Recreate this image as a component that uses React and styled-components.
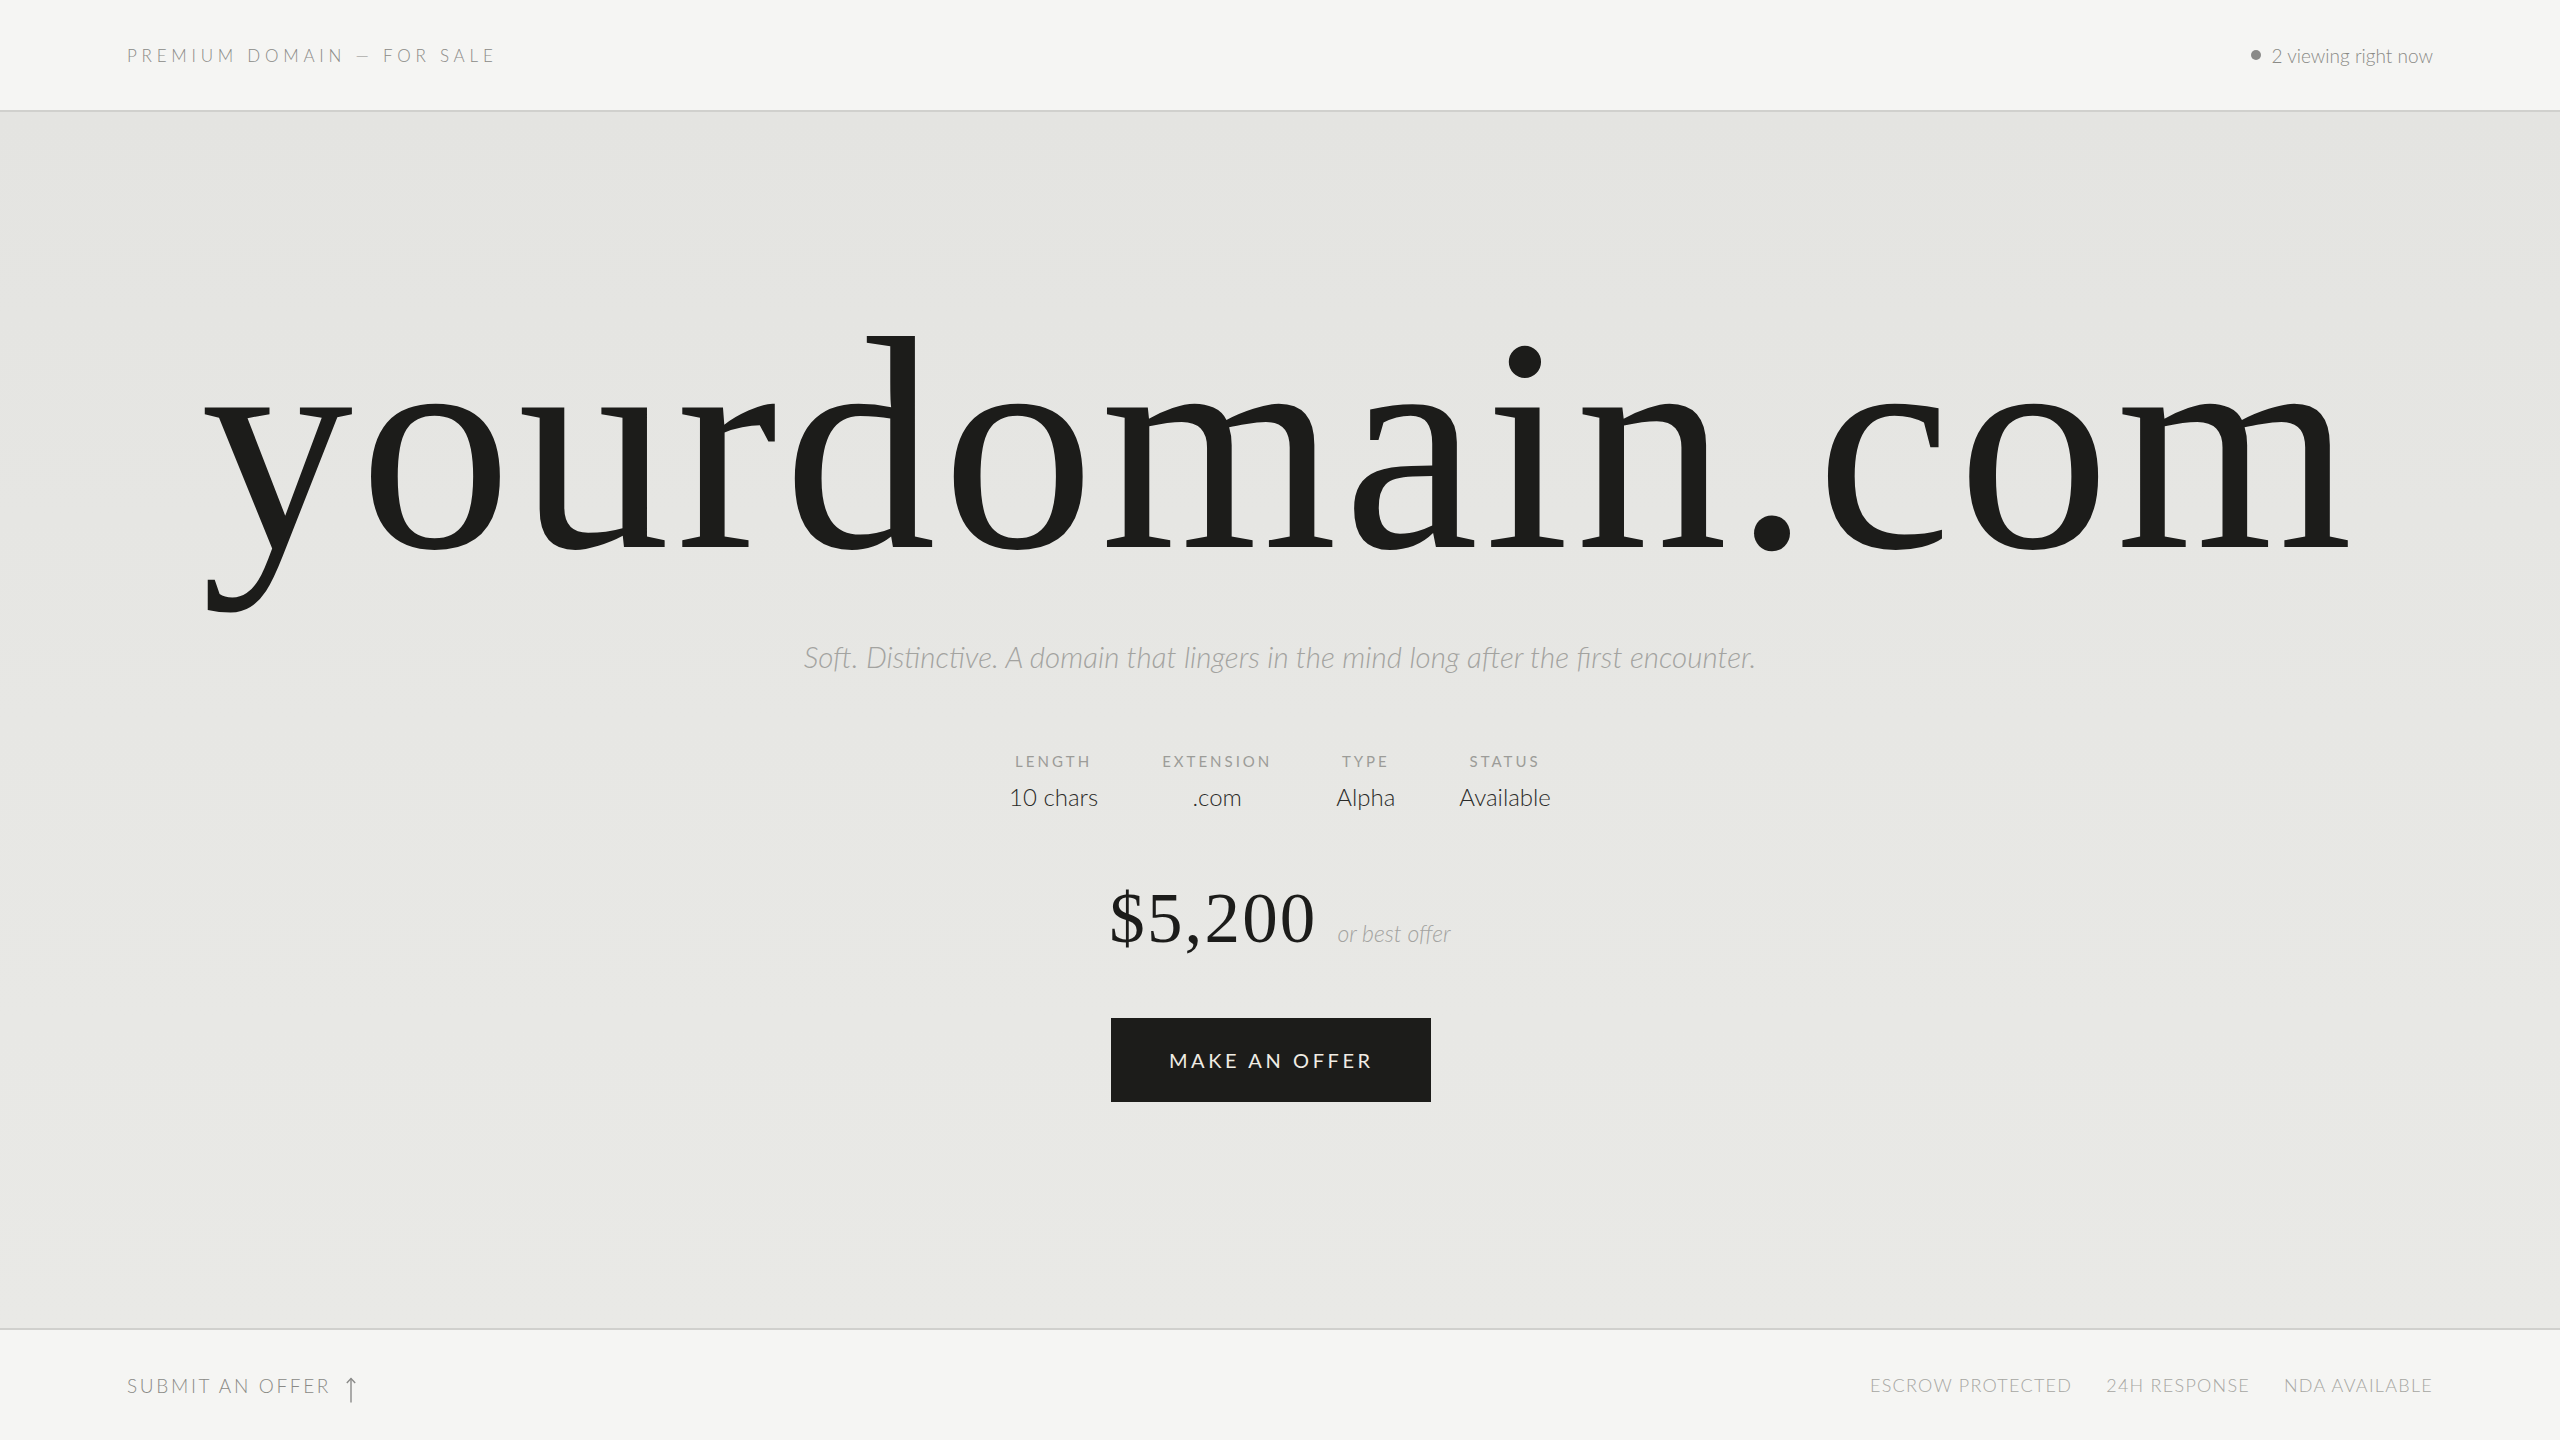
import React from 'react';
import styled, { createGlobalStyle } from 'styled-components';

const GlobalStyle = createGlobalStyle`
    html, body {
        margin: 0;
        padding: 0;
        background: #f5f5f3;
        font-family: "Lato", "Noto Sans", sans-serif;
        -webkit-font-smoothing: antialiased;
    }
    #root {
        min-height: 100vh;
        display: flex;
        flex-direction: column;
    }
`;

const Page = styled.div`
    flex: 1;
    display: flex;
    flex-direction: column;
    min-height: 100vh;
`;

const Bar = styled.header`
    height: 110px;
    flex-shrink: 0;
    display: flex;
    align-items: center;
    justify-content: space-between;
    padding: 0 127px;
    background: #f5f5f3;
    border-bottom: ${props => props.top ? '2px solid #d0d0cd' : 'none'};
    border-top: ${props => props.top ? 'none' : '2px solid #d0d0cd'};
`;

const Eyebrow = styled.span`
    font-size: 17px;
    font-weight: 300;
    letter-spacing: 0.28em;
    text-transform: uppercase;
    color: #8a8a86;
`;

const Viewers = styled.div`
    display: flex;
    align-items: center;
    gap: 10px;
    font-size: 19px;
    font-weight: 300;
    color: #8a8a86;
`;

const Dot = styled.span`
    width: 10px;
    height: 10px;
    border-radius: 50%;
    background: #8a8a88;
`;

const Stage = styled.main`
    flex: 1;
    display: flex;
    flex-direction: column;
    align-items: center;
    padding-top: 181px;
    background: linear-gradient(180deg, #e4e4e1 0%, #e7e7e4 50%, #e9e9e6 100%);
`;

const Domain = styled.h1`
    margin: 0;
    font-family: "Liberation Serif", "Times New Roman", serif;
    font-weight: 400;
    font-size: 304px;
    line-height: 1;
    letter-spacing: 0.021em;
    color: #1c1c1a;
`;

const Tagline = styled.p`
    margin: 42px 0 0;
    font-size: 29.5px;
    font-weight: 300;
    font-style: italic;
    line-height: 1.2;
    color: #a3a3a0;
`;

const Specs = styled.div`
    margin-top: 78px;
    display: flex;
    gap: 64px;
`;

const Spec = styled.div`
    display: flex;
    flex-direction: column;
    align-items: center;
    gap: 13px;
`;

const SpecLabel = styled.span`
    font-size: 15px;
    font-weight: 400;
    line-height: 1.2;
    letter-spacing: 0.2em;
    text-transform: uppercase;
    color: #9c9c98;
`;

const SpecValue = styled.span`
    font-size: 24px;
    font-weight: 300;
    line-height: 1.2;
    color: #2b2b29;
`;

const PriceBlock = styled.div`
    margin-top: 71px;
    display: flex;
    flex-direction: column;
    align-items: flex-start;
    gap: 64px;
`;

const PriceRow = styled.div`
    display: flex;
    align-items: baseline;
    gap: 20px;
`;

const Price = styled.span`
    font-family: "Liberation Serif", "Times New Roman", serif;
    font-size: 71px;
    line-height: 1;
    letter-spacing: 0.03em;
    color: #1c1c1a;
`;

const PriceNote = styled.span`
    font-size: 23px;
    font-weight: 300;
    font-style: italic;
    line-height: 1.2;
    color: #a3a3a0;
`;

const OfferButton = styled.button`
    margin-left: 2px;
    width: 320px;
    height: 84px;
    border: none;
    border-radius: 0;
    background: #1c1c1a;
    color: #f0ece4;
    font-family: "Lato", "Noto Sans", sans-serif;
    font-size: 20px;
    font-weight: 400;
    letter-spacing: 0.18em;
    text-transform: uppercase;
    cursor: pointer;
`;

const SubmitLink = styled.a`
    display: flex;
    align-items: center;
    gap: 14px;
    font-size: 19px;
    font-weight: 300;
    letter-spacing: 0.14em;
    text-transform: uppercase;
    color: #8a8a86;
    text-decoration: none;

    svg {
        margin-top: 9px;
    }
`;

const Perks = styled.ul`
    margin: 0;
    padding: 0;
    list-style: none;
    display: flex;
    gap: 34px;
`;

const Perk = styled.li`
    font-size: 18px;
    font-weight: 300;
    letter-spacing: 0.07em;
    text-transform: uppercase;
    color: #a6a6a2;
`;

const specs = [
    { label: 'Length', value: '10 chars' },
    { label: 'Extension', value: '.com' },
    { label: 'Type', value: 'Alpha' },
    { label: 'Status', value: 'Available' },
];

const perks = ['Escrow protected', '24h response', 'NDA available'];

const App = () => {
    return (
        <Page>
            <GlobalStyle />
            <Bar top>
                <Eyebrow>Premium domain — for sale</Eyebrow>
                <Viewers>
                    <Dot />
                    2 viewing right now
                </Viewers>
            </Bar>
            <Stage>
                <Domain>yourdomain.com</Domain>
                <Tagline>Soft. Distinctive. A domain that lingers in the mind long after the first encounter.</Tagline>
                <Specs>
                    {specs.map(item => (
                        <Spec key={item.label}>
                            <SpecLabel>{item.label}</SpecLabel>
                            <SpecValue>{item.value}</SpecValue>
                        </Spec>
                    ))}
                </Specs>
                <PriceBlock>
                    <PriceRow>
                        <Price>$5,200</Price>
                        <PriceNote>or best offer</PriceNote>
                    </PriceRow>
                    <OfferButton>Make an offer</OfferButton>
                </PriceBlock>
            </Stage>
            <Bar>
                <SubmitLink href="#offer">
                    Submit an offer
                    <svg width="12" height="26" viewBox="0 0 12 26" fill="none" stroke="#8a8a88" strokeWidth="1.4">
                        <path d="M6 25.5V1.5" />
                        <path d="M1.8 6L6 1.5L10.2 6" />
                    </svg>
                </SubmitLink>
                <Perks>
                    {perks.map(p => <Perk key={p}>{p}</Perk>)}
                </Perks>
            </Bar>
        </Page>
    );
};

export default App;
